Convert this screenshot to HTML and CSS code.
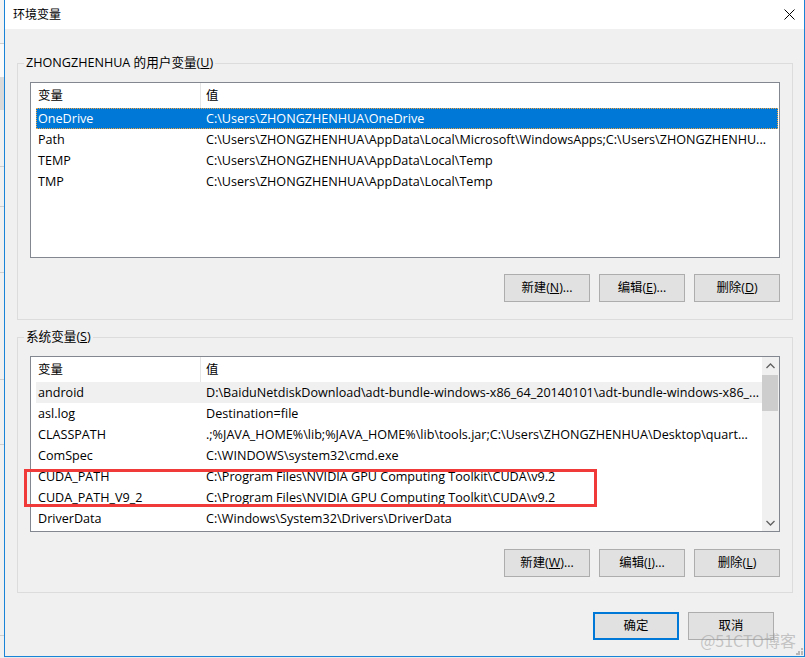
FILE: index.html
```html
<!DOCTYPE html>
<html lang="zh-CN">
<head>
<meta charset="utf-8">
<title>环境变量</title>
<link rel="stylesheet" href="styles.css">
</head>
<body>
<div class="screen">
  <div class="bg-strip">
    <div class="s s1"></div><div class="ln"></div>
    <div class="s s2"></div><div class="blk"></div>
    <div class="s s3"></div><div class="ln"></div>
    <div class="s s4"></div><div class="ln"></div>
    <div class="s s5"></div><div class="ln"></div>
    <div class="s s6"></div><div class="ln"></div>
    <div class="s s7"></div><div class="ln"></div>
    <div class="s s8"></div><div class="ln"></div>
  </div>
  <div class="window">
    <div class="titlebar">
      <span class="title">环境变量</span>
      <svg class="close" width="11" height="11" viewBox="0 0 11 11"><path d="M0.5 0.5 L10.5 10.5 M10.5 0.5 L0.5 10.5" stroke="#000" stroke-width="1" fill="none"/></svg>
    </div>
    <div class="body">
      <div class="group group-user">
        <div class="legend">ZHONGZHENHUA 的用户变量(<u>U</u>)</div>
        <div class="list">
          <div class="list-main">
            <div class="list-head"><div class="h1">变量</div><div class="h2">值</div></div>
            <div class="rows">
              <div class="row selected"><div class="n">OneDrive</div><div class="v">C:\Users\ZHONGZHENHUA\OneDrive</div></div>
              <div class="row"><div class="n">Path</div><div class="v">C:\Users\ZHONGZHENHUA\AppData\Local\Microsoft\WindowsApps;C:\Users\ZHONGZHENHU...</div></div>
              <div class="row"><div class="n">TEMP</div><div class="v">C:\Users\ZHONGZHENHUA\AppData\Local\Temp</div></div>
              <div class="row"><div class="n">TMP</div><div class="v">C:\Users\ZHONGZHENHUA\AppData\Local\Temp</div></div>
            </div>
          </div>
        </div>
        <div class="btns">
          <button class="btn">新建(<u>N</u>)...</button>
          <button class="btn">编辑(<u>E</u>)...</button>
          <button class="btn">删除(<u>D</u>)</button>
        </div>
      </div>

      <div class="group group-sys">
        <div class="legend">系统变量(<u>S</u>)</div>
        <div class="list">
          <div class="list-main">
            <div class="list-head"><div class="h1">变量</div><div class="h2">值</div></div>
            <div class="rows">
              <div class="row hover"><div class="n">android</div><div class="v">D:\BaiduNetdiskDownload\adt-bundle-windows-x86_64_20140101\adt-bundle-windows-x86_...</div></div>
              <div class="row"><div class="n">asl.log</div><div class="v">Destination=file</div></div>
              <div class="row"><div class="n">CLASSPATH</div><div class="v">.;%JAVA_HOME%\lib;%JAVA_HOME%\lib\tools.jar;C:\Users\ZHONGZHENHUA\Desktop\quart...</div></div>
              <div class="row"><div class="n">ComSpec</div><div class="v">C:\WINDOWS\system32\cmd.exe</div></div>
              <div class="row"><div class="n">CUDA_PATH</div><div class="v">C:\Program Files\NVIDIA GPU Computing Toolkit\CUDA\v9.2</div></div>
              <div class="row"><div class="n">CUDA_PATH_V9_2</div><div class="v">C:\Program Files\NVIDIA GPU Computing Toolkit\CUDA\v9.2</div></div>
              <div class="row"><div class="n">DriverData</div><div class="v">C:\Windows\System32\Drivers\DriverData</div></div>
            </div>
          </div>
          <div class="scrollbar">
            <div class="sb-btn"><svg width="9" height="6" viewBox="0 0 9 6"><path d="M0.5 5 L4.5 1 L8.5 5" stroke="#606060" stroke-width="1.3" fill="none"/></svg></div>
            <div class="sb-track"><div class="sb-thumb"></div></div>
            <div class="sb-btn"><svg width="9" height="6" viewBox="0 0 9 6"><path d="M0.5 1 L4.5 5 L8.5 1" stroke="#606060" stroke-width="1.3" fill="none"/></svg></div>
          </div>
        </div>
        <div class="btns">
          <button class="btn">新建(<u>W</u>)...</button>
          <button class="btn">编辑(<u>I</u>)...</button>
          <button class="btn">删除(<u>L</u>)</button>
        </div>
        <div class="highlight"></div>
      </div>

      <div class="footer">
        <button class="btn btn-default">确定</button>
        <button class="btn">取消</button>
      </div>
    </div>
    <div class="watermark">@51CTO博客</div>
    <svg class="grip" width="7" height="7" viewBox="0 0 7 7">
      <rect x="5" y="0" width="2" height="2" fill="#b8b8b8"/>
      <rect x="2" y="3" width="2" height="2" fill="#b8b8b8"/>
      <rect x="5" y="3" width="2" height="2" fill="#b8b8b8"/>
      <rect x="0" y="5" width="2" height="2" fill="#b8b8b8"/>
      <rect x="2" y="5" width="2" height="2" fill="#b8b8b8"/>
      <rect x="5" y="5" width="2" height="2" fill="#b8b8b8"/>
    </svg>
  </div>
</div>
</body>
</html>
```

FILE: styles.css
```css
* { box-sizing: border-box; }

html, body {
  margin: 0;
  padding: 0;
}

body {
  width: 805px;
  height: 658px;
  overflow: hidden;
  background: #e9e9e9;
  font-family: "Open Sans", "Noto Sans CJK SC", sans-serif;
  font-size: 12.4px;
  color: #000;
}

.screen {
  display: flex;
  width: 805px;
  height: 658px;
}

/* background window fragment on the left */
.bg-strip {
  width: 4px;
  flex: none;
  display: flex;
  flex-direction: column;
  background: #f0f0f0;
}
.bg-strip .s { flex: none; }
.bg-strip .ln { height: 1px; background: #cfcfcf; flex: none; }
.bg-strip .blk { height: 33px; background: #dadada; flex: none; }
.bg-strip .s1 { height: 43px; background: #f3f3f3; }
.bg-strip .s2 { height: 33px; background: #fafafa; }
.bg-strip .s3 { height: 56px; }
.bg-strip .s4 { height: 39px; }
.bg-strip .s5 { height: 65px; }
.bg-strip .s6 { height: 106px; }
.bg-strip .s7 { height: 64px; }
.bg-strip .s8 { height: 190px; }

.window {
  position: relative;
  width: 801px;
  height: 657px;
  flex: none;
  display: flex;
  flex-direction: column;
  border: 1px solid #1883d7;
  border-top: 0;
  background: #f0f0f0;
}

.titlebar {
  height: 29px;
  flex: none;
  background: #fff;
  display: flex;
  align-items: center;
  justify-content: space-between;
  padding: 0 9px 0 8px;
}
.title {
  font-size: 12px;
  line-height: 16px;
}
.close { display: block; margin-top: -1px; }

.body {
  flex: 1;
  padding: 34px 11px 0 12px;
}

.group {
  position: relative;
  border: 1px solid #dcdcdc;
  padding: 18px 12px 17px 12px;
}
.group-sys {
  margin-top: 17px;
  padding-bottom: 15px;
}

.legend {
  position: absolute;
  top: -9px;
  left: 6px;
  padding: 0 2px;
  line-height: 16px;
  font-size: 12.6px;
  background: #f0f0f0;
  white-space: nowrap;
}

.list {
  height: 176px;
  border: 1px solid #828790;
  background: #fff;
  display: flex;
}
.list-main {
  flex: 1;
  min-width: 0;
  display: flex;
  flex-direction: column;
}

.list-head {
  height: 25px;
  display: flex;
  align-items: stretch;
  flex: none;
}
.list-head .h1 {
  width: 169px;
  padding-left: 7px;
  line-height: 25px;
}
.list-head .h2 {
  flex: 1;
  border-left: 1px solid #e5e5e5;
  padding-left: 5px;
  line-height: 25px;
}

.rows {
  padding-left: 5px;
  padding-right: 1px;
}
.group-sys .rows { padding-right: 0; }

.row {
  height: 21px;
  display: flex;
  font-size: 12.6px;
  line-height: 21px;
  white-space: nowrap;
}
.row .n {
  width: 164px;
  flex: none;
  padding-left: 2px;
  overflow: hidden;
}
.row .v {
  flex: 1;
  min-width: 0;
  padding-left: 6px;
  overflow: hidden;
}
.row.selected {
  background: #0078d7;
  color: #fff;
  outline: 1px dotted #f2a541;
  outline-offset: -1px;
}
.row.hover {
  background: #f0f0f0;
}

.scrollbar {
  width: 17px;
  flex: none;
  background: #f0f0f0;
  display: flex;
  flex-direction: column;
}
.sb-btn {
  height: 17px;
  flex: none;
  display: flex;
  align-items: center;
  justify-content: center;
}
.sb-track {
  flex: 1;
  padding: 1px 1px 0 0;
}
.sb-thumb {
  height: 36px;
  background: #cdcdcd;
}

.btns {
  display: flex;
  justify-content: flex-end;
  gap: 9px;
  margin-top: 16px;
}
.group-sys .btns { margin-top: 17px; }

.btn {
  width: 86px;
  height: 28px;
  padding: 0;
  margin: 0;
  background: #e1e1e1;
  border: 1px solid #adadad;
  border-radius: 0;
  font-family: "Open Sans", "Noto Sans CJK SC", sans-serif;
  font-size: 12.4px;
  color: #000;
  line-height: 14px;
  text-align: center;
}
.btn-default {
  border: 2px solid #0078d7;
}

.footer {
  display: flex;
  justify-content: flex-end;
  gap: 9px;
  margin-top: 19px;
  margin-right: 19px;
}

.highlight {
  position: absolute;
  left: 6px;
  top: 131px;
  width: 573px;
  height: 38px;
  border: 3px solid #f03a3a;
  pointer-events: none;
}

.watermark {
  position: absolute;
  right: 8px;
  bottom: 10px;
  font-family: "Noto Sans CJK SC", sans-serif;
  font-size: 16px;
  line-height: 12px;
  color: rgba(150, 150, 150, 0.5);
  white-space: nowrap;
}

.grip {
  position: absolute;
  right: 1px;
  bottom: 1px;
  display: block;
}
```
